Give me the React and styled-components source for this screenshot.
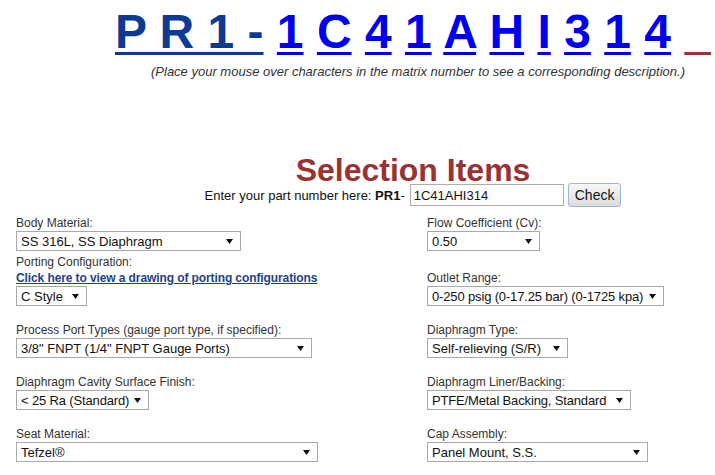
import React from 'react';
import styled, { createGlobalStyle } from 'styled-components';

const Global = createGlobalStyle`
  html, body { margin: 0; padding: 0; overflow: hidden; background: #fff; }
  body { font-family: "Liberation Sans", Arial, sans-serif; }
`;

const Page = styled.div`
  width: 826px;
  padding-top: 4px;
`;

const Matrix = styled.div`
  text-align: center;
  font-size: 48px;
  font-weight: bold;
  line-height: 56px;
  white-space: pre;
`;

const Char = styled.a`
  color: ${(p) => (p.$blank ? '#993333' : p.$prefix ? '#0d3b94' : '#0000ee')};
  text-decoration-line: underline;
  text-decoration-style: solid;
  text-decoration-color: currentColor;
  text-decoration-thickness: 3px;
  text-underline-offset: 4px;
  cursor: pointer;
`;

const Caption = styled.p`
  margin: 4px 0 0;
  padding-left: 10px;
  text-align: center;
  font-style: italic;
  font-size: 13px;
  line-height: 15px;
  color: #333;
`;

const Title = styled.h1`
  margin: 79px 0 0;
  text-align: center;
  font-size: 32px;
  line-height: 25px;
  font-weight: bold;
  color: #993333;
`;

const PartRow = styled.div`
  display: flex;
  justify-content: center;
  align-items: center;
  height: 24px;
  font-size: 13px;
  color: #111;
  white-space: pre;
`;

const PartInput = styled.input`
  box-sizing: border-box;
  width: 154px;
  height: 22px;
  margin-left: 5px;
  padding: 0 3px;
  border: 1px solid #abadb3;
  font-family: inherit;
  font-size: 13px;
  color: #111;
  outline: none;
`;

const CheckButton = styled.button`
  box-sizing: border-box;
  height: 24px;
  margin-left: 4px;
  padding: 0 6px;
  border: 1px solid #9db4d8;
  border-radius: 3px;
  background: linear-gradient(#f7f7f7, #dddddd);
  font-family: inherit;
  font-size: 14px;
  color: #111;
`;

const Form = styled.div`
  margin-top: 9px;
  padding-left: 16px;
`;

const Row = styled.div`
  display: grid;
  grid-template-columns: 411px auto;
  align-items: end;
  margin-top: ${(p) => p.$gap}px;
`;

const Field = styled.div`
  display: flex;
  flex-direction: column;
  align-items: flex-start;
`;

const Label = styled.div`
  font-size: 12px;
  line-height: 15px;
  color: #333;
`;

const DrawingLink = styled.a`
  font-size: 12px;
  font-weight: bold;
  letter-spacing: -0.1px;
  line-height: 16px;
  color: #1f3f8f;
  text-decoration: underline;
  cursor: pointer;
`;

const SelectBox = styled.div`
  box-sizing: border-box;
  width: ${(p) => p.$w}px;
  height: 20px;
  display: flex;
  align-items: center;
  gap: 4px;
  padding: 0 7px 0 4px;
  border: 1px solid #a9a9a9;
  background: #fff;
  font-size: 13px;
  color: #111;
  white-space: pre;
  overflow: hidden;
`;

const SelectText = styled.span`
  flex: 1 1 auto;
  min-width: 0;
  overflow: hidden;
  letter-spacing: ${(p) => (p.$tight ? '-0.15px' : 'normal')};
`;

const ArrowSvg = styled.svg`
  flex: 0 0 auto;
`;

const Arrow = () => (
  <ArrowSvg width="7" height="5" viewBox="0 0 7 5">
    <polygon points="0,0 7,0 3.5,5" fill="#111" />
  </ArrowSvg>
);

const Select = ({ w, value, tight }) => (
  <SelectBox $w={w}>
    <SelectText $tight={tight}>{value}</SelectText>
    <Arrow />
  </SelectBox>
);

const SelectField = ({ label, w, value, tight, children }) => (
  <Field>
    <Label>{label}</Label>
    {children}
    <Select w={w} value={value} tight={tight} />
  </Field>
);

const chars = ['1', 'C', '4', '1', 'A', 'H', 'I', '3', '1', '4'];

export default function App() {
  return (
    <Page>
      <Global />
      <Matrix>
        <Char $prefix>P R 1 -</Char>
        {chars.map((c, i) => (
          <React.Fragment key={i}>
            {' '}
            <Char>{c}</Char>
          </React.Fragment>
        ))}
        {' '}
        <Char $blank>{'\u00a0\u00a0'}</Char>
      </Matrix>
      <Caption>(Place your mouse over characters in the matrix number to see a corresponding description.)</Caption>
      <Title>Selection Items</Title>
      <PartRow>
        <span>Enter your part number here: </span>
        <b>PR1</b>
        <span>-</span>
        <PartInput defaultValue="1C41AHI314" />
        <CheckButton>Check</CheckButton>
      </PartRow>
      <Form>
        <Row $gap={0}>
          <SelectField label="Body Material:" w={225} value="SS 316L, SS Diaphragm" />
          <SelectField label="Flow Coefficient (Cv):" w={113} value="0.50" />
        </Row>
        <Row $gap={4}>
          <SelectField label="Porting Configuration:" w={71} value="C Style">
            <DrawingLink>Click here to view a drawing of porting configurations</DrawingLink>
          </SelectField>
          <SelectField label="Outlet Range:" w={237} value="0-250 psig (0-17.25 bar) (0-1725 kpa)" tight />
        </Row>
        <Row $gap={17}>
          <SelectField label="Process Port Types (gauge port type, if specified):" w={296} value={'3/8" FNPT (1/4" FNPT Gauge Ports)'} />
          <SelectField label="Diaphragm Type:" w={141} value="Self-relieving (S/R)" />
        </Row>
        <Row $gap={17}>
          <SelectField label="Diaphragm Cavity Surface Finish:" w={133} value="< 25 Ra (Standard)" tight />
          <SelectField label="Diaphragm Liner/Backing:" w={204} value="PTFE/Metal Backing, Standard" tight />
        </Row>
        <Row $gap={17}>
          <SelectField label="Seat Material:" w={302} value="Tefzel®" />
          <SelectField label="Cap Assembly:" w={221} value="Panel Mount, S.S." />
        </Row>
      </Form>
    </Page>
  );
}
